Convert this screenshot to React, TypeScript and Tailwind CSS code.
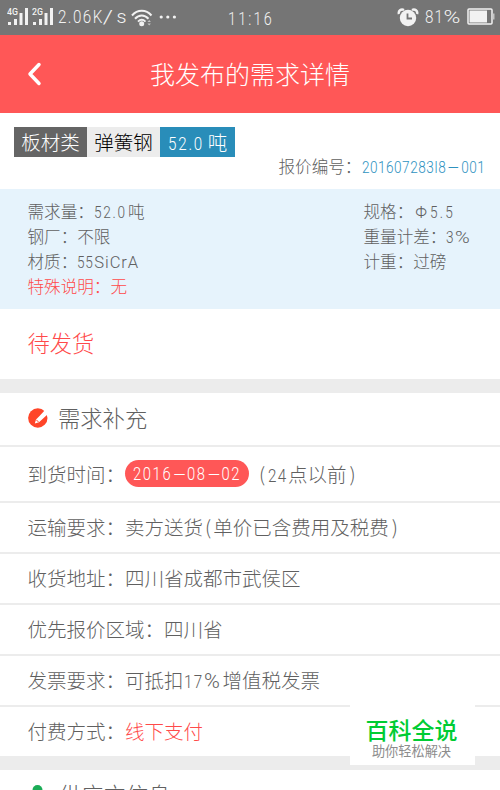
import type { ReactNode } from "react";

type NumProps = {
  children: ReactNode;
  className: string;
};

// Cifras estrechas, el ancho se pasa por className
const Num = ({ children, className }: NumProps) => (
  <span className={`inline-block leading-none whitespace-nowrap ${className}`}>
    <span className="inline-block origin-left scale-x-80 font-[Roboto] font-light">
      {children}
    </span>
  </span>
);

const Dash = () => (
  <span className="inline-block w-[18.500px] scale-x-300 text-center tracking-normal">-</span>
);

type RowProps = {
  label: string;
  children: ReactNode;
  className?: string;
};

const Row = ({ label, children, className = "h-[51px]" }: RowProps) => (
  <div
    className={`flex items-center border-b-2 border-[#ececec] pb-px pl-[27.500px] text-[19.500px] whitespace-nowrap ${className}`}
  >
    <span>{label}：</span>
    {children}
  </div>
);

const Signal = ({ label }: { label: string }) => (
  <svg width="21" height="18" viewBox="0 0 21 18" fill="#f2f2f2">
    <text x="0" y="7" fontSize="8.500" fontFamily="Roboto" fontWeight="500" textLength="11" lengthAdjust="spacingAndGlyphs">
      {label}
    </text>
    <rect x="1" y="14" width="3" height="3" />
    <rect x="7" y="11" width="3" height="6" />
    <rect x="12.500" y="5" width="3" height="12" />
    <rect x="18" y="0" width="3" height="17" />
  </svg>
);

const StatusBar = () => (
  <div className="flex h-[35px] items-center bg-[#757575] text-[#f2f2f2]">
    <div className="flex w-[228px] items-center pb-px pl-[7px]">
      <Signal label="4G" />
      <span className="w-1" />
      <Signal label="2G" />
      <Num className="mb-[3px] ml-[5px] w-[73px] text-[19px] tracking-[1.800px]">
        2.06
        <span className="inline-block w-[13px]">K</span>
        <span className="inline-block w-[17px] origin-left scale-x-170">/</span>
        <span className="inline-block origin-left scale-x-130">s</span>
      </Num>
      <svg className="mt-px" width="22" height="18" viewBox="0 0 22 18" fill="none" stroke="#f2f2f2" strokeWidth="2">
        <path d="M1 6.500C6.500.2 15 .2 20.500 6.500M4 9.800C8 5.500 13.500 5.500 17.500 9.800M7 12.600C9.500 10.200 12 10.200 14.500 12.600" />
        <circle cx="10.700" cy="14.800" r="2.500" fill="#f2f2f2" stroke="none" />
        <path d="M16.500 13l1.700-2 1.700 2zM16.500 14.500l1.700 2 1.700-2z" fill="#c4c4c4" stroke="none" />
      </svg>
      <svg className="ml-[6px]" width="18" height="4" viewBox="0 0 18 4" fill="#f2f2f2">
        <circle cx="2.200" cy="2" r="1.600" />
        <circle cx="8.800" cy="2" r="1.600" />
        <circle cx="15.400" cy="2" r="1.600" />
      </svg>
    </div>
    <Num className="w-[169px] text-[18px] tracking-[2.700px]">11:16</Num>
    <svg width="22" height="19" viewBox="0 0 22 19">
      <path d="M2 6C1 3 4 .5 7 2M20 6C21 3 18 .5 15 2" stroke="#f2f2f2" strokeWidth="2.500" fill="none" />
      <circle cx="11" cy="10" r="8.200" fill="#f2f2f2" />
      <path d="M10.500 5.500v5h4.500" stroke="#757575" strokeWidth="1.800" fill="none" />
    </svg>
    <Num className="mb-[4px] ml-[6px] w-[42px] text-[19px] tracking-[1.200px]">
      81<span className="inline-block origin-left scale-x-150 tracking-normal">%</span>
    </Num>
    <svg className="mb-[2px]" width="28" height="17" viewBox="0 0 28 17">
      <rect x="1" y="1" width="24" height="15" rx="1" fill="none" stroke="#f2f2f2" strokeWidth="1.500" />
      <rect x="2.500" y="2.500" width="17.500" height="12" fill="#f2f2f2" />
      <rect x="25.500" y="5.500" width="2" height="6" fill="#c4c4c4" />
    </svg>
  </div>
);

const Header = () => (
  <header className="flex h-[78px] items-center bg-[#ff5757] text-white">
    <svg className="ml-[27px]" width="15" height="24" viewBox="0 0 15 24" fill="none" stroke="white" strokeWidth="3.500" strokeLinecap="round" strokeLinejoin="round">
      <path d="M12 2.500L3 12l9 9.500" />
    </svg>
    <h1 className="mb-[2px] ml-[108px] text-[25px] leading-none">我发布的需求详情</h1>
  </header>
);

export default function App() {
  return (
    <div className="relative h-[790px] w-[500px] overflow-hidden bg-white font-['Noto_Sans_CJK_SC',sans-serif] font-light text-[#606060]">
      <StatusBar />
      <Header />

      {/* Etiquetas y número de oferta */}
      <section className="h-[76px] pt-[14px]">
        <div className="ml-[14px] flex h-[30px] w-[221px] items-center text-[19.500px] leading-[30px]">
          <span className="h-[30px] w-[73px] bg-[#656565] text-center text-white">板材类</span>
          <span className="h-[30px] w-[73px] bg-[#ececec] text-center text-black">弹簧钢</span>
          <span className="flex h-[30px] w-[75px] items-center justify-center bg-[#298db9] text-white">
            <Num className="w-[40px] text-[19px] tracking-[2.200px]">52.0</Num>吨
          </span>
        </div>
        <div className="-mt-px flex items-center pl-[278.500px] text-[16.600px] leading-[20px]">
          <span>报价编号：</span>
          <Num className="ml-px w-[124px] text-[17px] tracking-[0.600px] text-[#2e92bf]">
            201607283I8<Dash />001
          </Num>
        </div>
      </section>

      <section className="flex h-[120px] bg-[#e6f3fc] pt-[10px] pl-[27.500px] text-[16.600px] leading-[25px] whitespace-nowrap">
        <div className="w-[336px]">
          <p className="h-[25px]">需求量：<Num className="w-[34px] text-[17px] tracking-[2.200px]">52.0</Num>吨</p>
          <p className="h-[25px]">钢厂：不限</p>
          <p className="h-[25px]">材质：<Num className="w-[17px] text-[17px] tracking-[1px]">55</Num><span className="font-[Roboto] tracking-[0.900px]">SiCrA</span></p>
          <p className="h-[25px] text-[#ff4a4a]">特殊说明：无</p>
        </div>
        <div>
          <p className="h-[25px]">规格：<span className="ml-[2px] font-[Roboto] text-[16.500px]">Φ</span><Num className="ml-[3px] text-[17px] tracking-[2.800px]">5.5</Num></p>
          <p className="h-[25px]">重量计差：<Num className="w-[9px] text-[17px]">3</Num><span className="inline-block origin-left scale-x-120 font-[Roboto]">%</span></p>
          <p className="h-[25px]">计重：过磅</p>
        </div>
      </section>

      <div className="flex h-[70px] items-center pb-[2px] pl-[27.500px] text-[22.300px] text-[#ff4a4a]">待发货</div>
      <div className="h-[14px] bg-[#ececec]" />

      <div className="flex h-[54px] items-center border-b-2 border-[#ececec] pb-[2px] pl-7">
        <svg width="20" height="20" viewBox="0 0 20 20">
          <circle cx="9.800" cy="10" r="9.700" fill="#ff4528" />
          <path d="M18 1L11.500 8 8 11.500 6.800 15.500l4.200-1.200L20 6z" fill="white" />
          <path d="M8.300 11.800l2.300 2.300" stroke="#ff4528" strokeWidth="1" />
        </svg>
        <h2 className="ml-[10px] text-[22.300px]">需求补充</h2>
      </div>

      <Row label="到货时间" className="h-[56px]">
        <span className="flex h-[27px] w-[124px] items-center rounded-full bg-[#ff5757] pl-2 text-white">
          <Num className="text-[18.500px] tracking-[2px]">
            2016<Dash />08<Dash />02
          </Num>
        </span>
        <span className="ml-[10px] inline-block w-[9px]">(</span>
        <span>
          <Num className="w-[20px] text-[19px] tracking-[1.500px]">24</Num>
          点以前
          <span className="ml-[3px]">)</span>
        </span>
      </Row>
      <Row label="运输要求">
        <span>
          卖方送货<span className="mx-[2px]">(</span>单价已含费用及税费
          <span className="ml-[3px]">)</span>
        </span>
      </Row>
      <Row label="收货地址">
        <span>四川省成都市武侯区</span>
      </Row>
      <Row label="优先报价区域">
        <span>四川省</span>
      </Row>
      <Row label="发票要求">
        <span>
          可抵扣
          <Num className="w-[20px] text-[19px] tracking-[1.500px]">17</Num>
          <span className="inline-block w-[19px] origin-left scale-x-110 font-[Roboto] leading-none">%</span>
          增值税发票
        </span>
      </Row>
      <div className="flex h-[49px] items-center pb-[2px] pl-[27.500px] text-[19.500px]">
        <span>付费方式：</span>
        <span className="text-[#ff4a4a]">线下支付</span>
      </div>
      <div className="h-[14px] bg-[#ececec]" />

      <div className="flex h-[50px] items-center pl-7">
        <svg width="20" height="20" viewBox="0 0 20 20" fill="#1aac56">
          <circle cx="9.500" cy="5" r="5" />
          <path d="M1 20c0-12 17-12 17 0z" />
        </svg>
        <h2 className="ml-[11px] text-[22.300px]">供应方信息</h2>
      </div>

      {/* Marca superpuesta */}
      <div className="absolute top-[705px] left-[350px] flex h-[60px] w-[125px] flex-col items-center bg-white pr-[2px]">
        <span className="mt-[10px] text-[23px] leading-[28px] font-medium text-[#00cc33]">百科全说</span>
        <span className="text-[13.200px] leading-[15px] font-normal text-[#8c8c8c]">助你轻松解决</span>
      </div>
    </div>
  );
}
